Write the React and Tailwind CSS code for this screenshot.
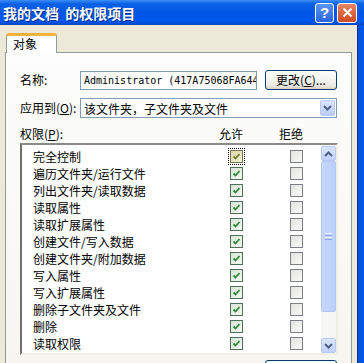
const rows = [
  '完全控制',
  '遍历文件夹/运行文件',
  '列出文件夹/读取数据',
  '读取属性',
  '读取扩展属性',
  '创建文件/写入数据',
  '创建文件夹/附加数据',
  '写入属性',
  '写入扩展属性',
  '删除子文件夹及文件',
  '删除',
  '读取权限',
]

function Check({ checked, focused }) {
  const box = (
    <div
      className={
        'w-[13px] h-[13px] border flex items-center justify-center ' +
        (checked
          ? focused
            ? 'border-[#6f7550] bg-[linear-gradient(135deg,#d9d6a8,#f3f1d8)]'
            : 'border-[#4f6f5c] bg-[linear-gradient(135deg,#d7e6d6,#f4f8f2)]'
          : 'border-[#7c7f86] bg-[linear-gradient(135deg,#e2e2df,#fafaf8)]')
      }
    >
      {checked && (
        <svg width="9" height="9" viewBox="0 0 9 9">
          <path
            d="M1.5 4.5 L3.5 6.5 L7.5 2"
            fill="none"
            stroke={focused ? '#6e7a2c' : '#2f8a3c'}
            strokeWidth="1.8"
          />
        </svg>
      )}
    </div>
  )
  if (!focused) return box
  return <div className="outline-1 outline-dotted outline-black outline-offset-1">{box}</div>
}

function Chevron({ up, color = '#4d6185' }) {
  return (
    <svg width="9" height="6" viewBox="0 0 9 6">
      <path
        d={up ? 'M1 5 L4.5 1.5 L8 5' : 'M1 1 L4.5 4.5 L8 1'}
        fill="none"
        stroke={color}
        strokeWidth="2"
      />
    </svg>
  )
}

function ScrollBtn({ up }) {
  return (
    <div className="h-[15px] w-[15px] rounded-[2px] border border-[#b7c9f4] bg-[linear-gradient(180deg,#dce6fd,#c0d1fa)] flex items-center justify-center">
      <Chevron up={up} />
    </div>
  )
}

export default function App() {
  return (
    <div className="w-[364px] h-[363px] overflow-hidden bg-[#ECE9D8] flex flex-col font-['Noto_Sans_CJK_SC',sans-serif] text-[12px] text-black">
      {/* title bar */}
      <div className="h-[25px] shrink-0 flex items-center bg-[linear-gradient(180deg,#3d8ef6_0%,#0b61e6_15%,#0055e5_55%,#0058ee_85%,#0044c4_100%)]">
        <span className="pl-[3px] flex-1 text-white font-bold text-[14px] leading-[20px] whitespace-pre [text-shadow:1px_1px_#0a2a8a]">
          我的文档  的权限项目
        </span>
        <div className="w-[19px] h-[20px] mr-[3px] rounded-[3px] border border-white bg-[linear-gradient(180deg,#5b94f5,#2a64de)] flex items-center justify-center text-white font-bold text-[15px] leading-none font-['Liberation_Sans',sans-serif]">
          ?
        </div>
        <div className="w-[20px] h-[20px] mr-[7px] rounded-[3px] border border-white bg-[linear-gradient(180deg,#e88460,#cf4a22)] flex items-center justify-center">
          <svg width="11" height="11" viewBox="0 0 11 11">
            <path d="M1.5 1.5 L9.5 9.5 M9.5 1.5 L1.5 9.5" stroke="white" strokeWidth="2" />
          </svg>
        </div>
      </div>

      <div className="flex flex-1 min-h-0">
        <div className="flex-1 flex flex-col pt-[8px]">
          {/* tab */}
          <div className="flex pl-[6px]">
            <div className="relative z-10 -mb-px w-[51px] h-[20px] bg-white border-x border-[#919b9c] border-t-[3px] border-t-[#f2b33c] rounded-t-[3px] pl-[6px] leading-[16px]">
              对象
            </div>
          </div>

          {/* panel */}
          <div className="ml-[5px] w-[347px] flex-1 bg-[linear-gradient(180deg,#fdfdfd,#f6f5f0)] border border-[#919b9c] pl-[14px] flex flex-col">
            <div className="mt-[17px] h-[20px] flex items-center">
              <span className="w-[60px]">名称:</span>
              <div className="w-[177px] h-[19px] border border-[#7f9db9] bg-white overflow-hidden whitespace-nowrap pl-[3px] font-['DejaVu_Sans_Mono',monospace] text-[10px] leading-[17px]">
                Administrator (417A75068FA644BC)
              </div>
              <div className="ml-[8px] w-[72px] h-[20px] rounded-[3px] border border-[#003c74] bg-[linear-gradient(180deg,#ffffff,#ecebe6_80%,#d6d0c5)] flex items-center justify-center leading-none">
                更改(<span className="underline">C</span>)...
              </div>
            </div>

            <div className="mt-[8px] h-[20px] w-[257px] ml-[60px] border border-[#7f9db9] bg-white flex items-center">
              <span className="flex-1 pl-[3px] leading-[17px]">该文件夹，子文件夹及文件</span>
              <div className="w-[15px] h-[16px] mr-[1px] rounded-[2px] border border-[#b7c9f4] bg-[linear-gradient(180deg,#dce6fd,#b9cbf8)] flex items-center justify-center">
                <Chevron />
              </div>
            </div>
            <span className="-mt-[20px] h-[20px] leading-[20px] w-[60px]">
              应用到(<span className="underline">O</span>):
            </span>

            <div className="h-[25px] pt-[7px] flex leading-[17px]">
              <span className="w-[199px]">
                权限(<span className="underline">P</span>):
              </span>
              <span className="w-[60px]">允许</span>
              <span>拒绝</span>
            </div>

            {/* list box */}
            <div className="w-[318px] h-[212px] border-2 border-t-[#8a8a8a] border-l-[#6f6f6f] border-r-[#f0efe8] border-b-[#f0efe8] bg-white flex">
              <div className="flex-1 pt-[3px]">
                {rows.map((r, i) => (
                  <div key={r} className="h-[17px] flex items-center">
                    <span className="w-[208px] pl-[11px] leading-[17px] whitespace-nowrap">{r}</span>
                    <Check checked focused={i === 0} />
                    <div className="w-[47px]" />
                    <Check checked={false} />
                  </div>
                ))}
              </div>
              <div className="w-[15px] pt-[1px] flex flex-col bg-[#f7f7f3]">
                <ScrollBtn up />
                <div className="h-[151px] rounded-[2px] border border-[#b4c8f6] bg-[linear-gradient(90deg,#c6d6fc,#bcd0fa)] flex flex-col items-center justify-center gap-[1px]">
                  <div className="w-[7px] h-px bg-[#eef3fe]" />
                  <div className="w-[7px] h-px bg-[#8ca6e6]" />
                  <div className="w-[7px] h-px bg-[#eef3fe]" />
                  <div className="w-[7px] h-px bg-[#8ca6e6]" />
                </div>
                <div className="flex-1" />
                <ScrollBtn />
              </div>
            </div>

            <div className="mt-[5px] ml-[245px] w-[72px] h-[21px] rounded-[3px] border border-[#003c74] bg-[linear-gradient(180deg,#ffffff,#ecebe6)]" />
          </div>
        </div>

        {/* right window frame */}
        <div className="w-[7px] shrink-0 border-l border-[#0a2f9e] bg-[linear-gradient(90deg,#0a4fd6,#0058ee)]" />
      </div>
    </div>
  )
}
